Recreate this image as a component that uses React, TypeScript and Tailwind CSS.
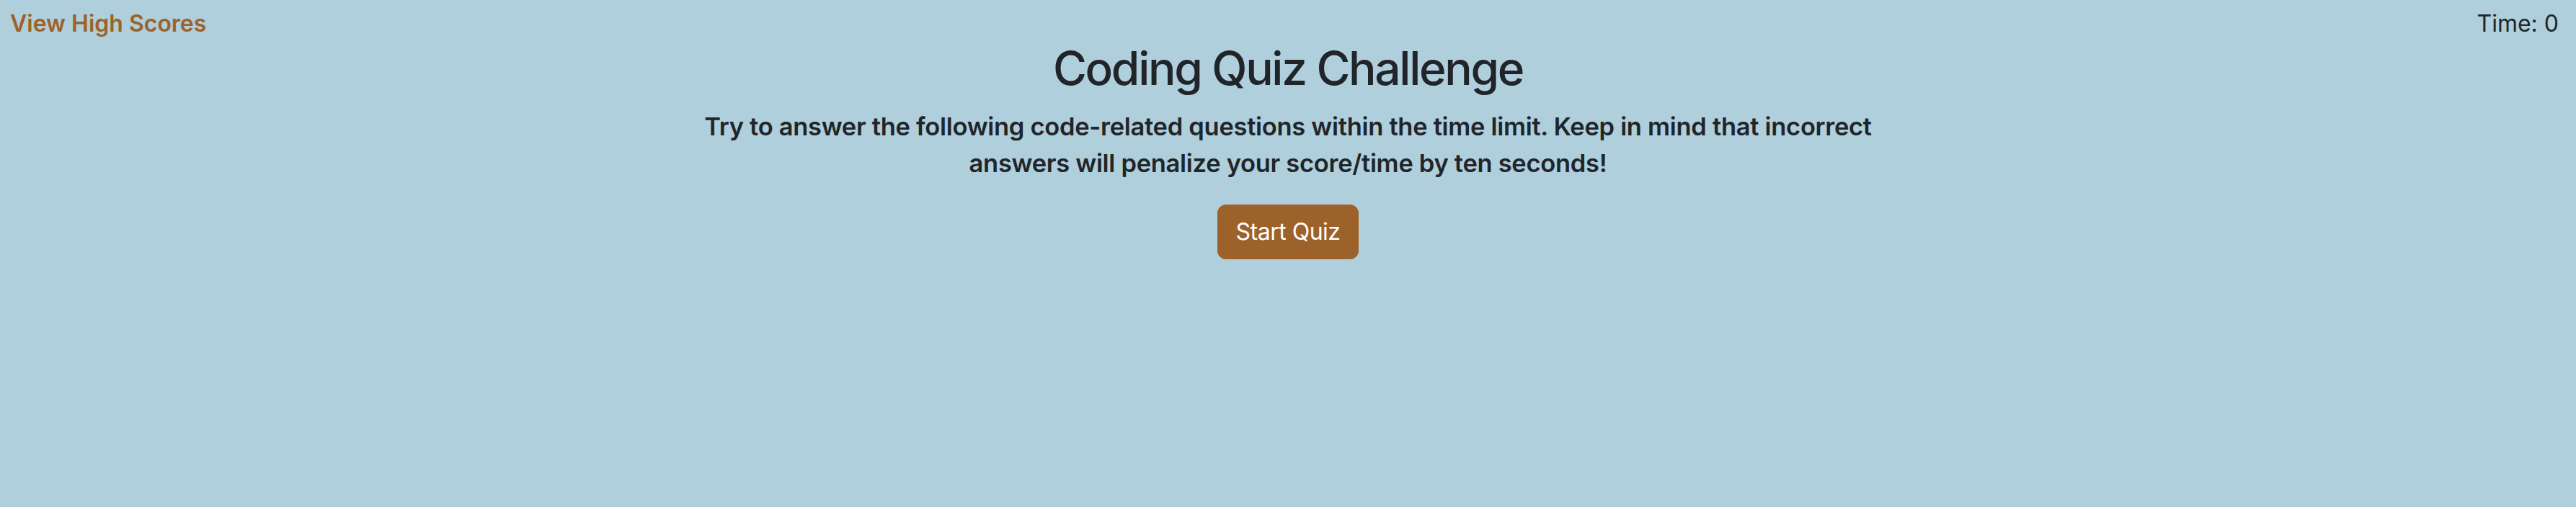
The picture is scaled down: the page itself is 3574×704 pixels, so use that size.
const App = () => {
  return (
    <div className="min-h-screen bg-[#afcfdc] text-[#212529] font-['Inter',sans-serif]">
      <header className="flex justify-between items-center pt-[9px] pl-[14px] pr-[24px] text-[32px] leading-[48px]">
        <a href="#" className="font-semibold text-[#9d6229]">
          View High Scores
        </a>
        <div>Time: 0</div>
      </header>
      <main className="flex flex-col items-center text-center">
        <h1 className="text-[64px] leading-[1.2] font-medium tracking-[-2.3px]">Coding Quiz Challenge</h1>
        <p className="mt-[16px] mb-[32px] max-w-[1700px] text-[34.5px] leading-[51px] font-semibold tracking-[-0.3px]">
          Try to answer the following code-related questions within the time limit. Keep in mind that
          incorrect answers will penalize your score/time by ten seconds!
        </p>
        <button className="px-[24px] py-[12px] border-2 border-[#9d6229] bg-[#9d6229] text-white text-[32px] leading-[48px] tracking-[-0.5px] rounded-[12px]">
          Start Quiz
        </button>
      </main>
    </div>
  );
};

export default App;
